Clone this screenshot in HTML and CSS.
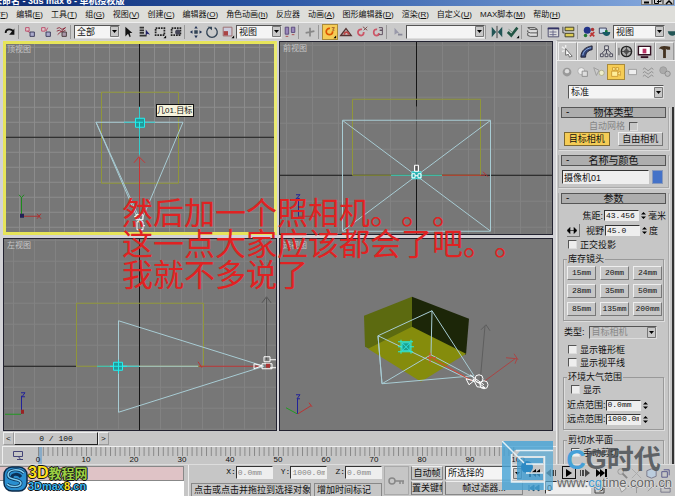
FILE: index.html
```html
<!DOCTYPE html>
<html lang="zh-CN">

<head>
    <meta charset="UTF-8">
    <title>未命名 - 3ds max 6 - 单机授权版</title>
    <link rel="stylesheet" href="styles.css">
</head>

<body>
    <header class="title-bar">
        <span class="title-text">未命名 - 3ds max 6 - 单机授权版</span>
        <div class="win-btns">
            <button aria-label="最小化"><svg width="9" height="5"><path d="M2 2.5h5" stroke="#000" stroke-width="2"/></svg></button>
            <button aria-label="还原"><svg width="9" height="5"><path d="M1.500 0v3.500h4v-3.500M4 1.500h4v-1.500" stroke="#000" fill="none"/></svg></button>
            <button aria-label="关闭"><svg width="9" height="5"><path d="M2 4l3-3 3 3" stroke="#000" stroke-width="1.500" fill="none"/></svg></button>
        </div>
    </header>

    <nav class="menu">
        <button class="first">文件(<u>F</u>)</button>
        <button>编辑(<u>E</u>)</button>
        <button>工具(<u>T</u>)</button>
        <button>组(<u>G</u>)</button>
        <button>视图(<u>V</u>)</button>
        <button>创建(<u>C</u>)</button>
        <button>编辑器(<u>O</u>)</button>
        <button>角色动画(<u>h</u>)</button>
        <button>反应器</button>
        <button>动画(<u>A</u>)</button>
        <button>图形编辑器(<u>D</u>)</button>
        <button>渲染(<u>R</u>)</button>
        <button>自定义(<u>U</u>)</button>
        <button>MAX脚本(<u>M</u>)</button>
        <button>帮助(<u>H</u>)</button>
    </nav>

    <!-- 主工具栏 -->
    <div class="toolbar">
        <button class="tool" aria-label="重做"><svg viewBox="0 0 16 16"><path d="M3 9c0-5 7-5 9-1" stroke="#111" stroke-width="2" fill="none"/><path d="M13 4v7H7z" fill="#111"/></svg></button>
        <i class="sep"></i>
        <button class="tool" aria-label="链接"><svg viewBox="0 0 16 16"><path d="M3 3h4v4H3zM5 7l4 2" stroke="#b46" fill="#dcc"/><path d="M8 8h5v5H8z" stroke="#335" fill="#aac"/></svg></button>
        <button class="tool" aria-label="断开链接"><svg viewBox="0 0 16 16"><path d="M3 3h4v4H3z" stroke="#b46" fill="#dcc"/><path d="M10 3l-2 4" stroke="#b46"/><path d="M8 8h5v5H8z" stroke="#335" fill="#aac"/></svg></button>
        <button class="tool" aria-label="绑定"><svg viewBox="0 0 16 16"><path d="M2 4l3-1 3 2 4-2M2 7l3-1 3 2 4-2M3 11l9-8" stroke="#823" fill="none"/><path d="M8 8h5v5H8z" stroke="#433" fill="#a9a"/></svg></button>
        <i class="sep"></i>
        <select class="w45" aria-label="选择过滤器"><option>全部</option></select>
        <button class="tool" aria-label="选择"><svg viewBox="0 0 16 16"><path d="M5 2v11l3-3 2 4 1-1-1-4h3z" fill="#111"/></svg></button>
        <button class="tool" aria-label="按名称选择"><svg viewBox="0 0 16 16"><path d="M3 3h5M3 6h5M3 9h5M3 12h8" stroke="#333" stroke-width="2"/><path d="M10 5v7l2-2 3 1z" fill="#226"/></svg></button>
        <button class="tool" aria-label="矩形选区"><svg viewBox="0 0 16 16"><path d="M3 3.500h10v8H3z" stroke="#222" stroke-width="2" stroke-dasharray="2 1" fill="none"/><path d="M15 12v3h-3z"/></svg></button>
        <button class="tool" aria-label="窗口交叉"><svg viewBox="0 0 16 16"><path d="M3 3.500h10v8H3z" stroke="#222" stroke-width="2" stroke-dasharray="2 1" fill="none"/><circle cx="10" cy="8" r="3" fill="#445"/></svg></button>
        <i class="sep"></i>
        <button class="tool" aria-label="移动"><svg viewBox="0 0 16 16"><path d="M8 1l2 3H6zM8 15l2-3H6zM1 8l3-2v4zM15 8l-3-2v4z" fill="#235"/><path d="M6 6h4v4H6z" fill="#345"/></svg></button>
        <button class="tool" aria-label="旋转"><svg viewBox="0 0 16 16"><path d="M5 3a6 6 0 1 0 6 0" stroke="#345" stroke-width="1.500" fill="none"/><path d="M3 2h5v4z" fill="#345"/></svg></button>
        <button class="tool" aria-label="缩放"><svg viewBox="0 0 16 16"><path d="M2.500 2.500h10v10h-10z" stroke="#966" fill="#ccd"/><path d="M3 7h5v5H3z" fill="#a44"/><path d="M15 12v3h-3z"/></svg></button>
        <select class="w45" aria-label="参考坐标系"><option>视图</option></select>
        <button class="tool" aria-label="轴心"><svg viewBox="0 0 16 16"><path d="M2.500 2.500h4v8h-4zM9.500 2.500h4v6h-4z" stroke="#547" fill="#98b"/><path d="M3 13h3M10 11h3" stroke="#a44"/></svg></button>
        <i class="sep"></i>
        <button class="tool" aria-label="操纵"><svg viewBox="0 0 16 16"><path d="M8 3v10M3 9l10-2" stroke="#888" stroke-width="2"/></svg></button>
        <i class="sep"></i>
        <button class="tool on" aria-label="三维捕捉"><svg viewBox="0 0 16 16"><path d="M8 4C3 3 2 11 7 11c3 0 4-2 4-4" stroke="#d50" stroke-width="2" fill="none"/><path d="M10 3h3l-2 3h2" stroke="#952" fill="none"/><path d="M15 12v3h-3z"/></svg></button>
        <button class="tool" aria-label="角度捕捉"><svg viewBox="0 0 16 16"><path d="M2 12L8 4l6 8z" stroke="#533" stroke-width="1.500" fill="none"/><path d="M6 11c0-4 5-4 5 0" stroke="#b44" fill="none" stroke-width="2"/></svg></button>
        <button class="tool" aria-label="百分比捕捉"><svg viewBox="0 0 16 16"><path d="M8 5C2 4 2 12 7 12c3 0 3-2 3-4" stroke="#c56" stroke-width="2" fill="none"/><path d="M9 2l5 4M14 2l-4 4" stroke="#744"/></svg></button>
        <button class="tool" aria-label="微调捕捉"><svg viewBox="0 0 16 16"><path d="M7 5C2 4 2 12 6 12c3 0 3-2 3-3" stroke="#c56" stroke-width="2" fill="none"/><path d="M9 3h4v3h-3 3v5H9" stroke="#545" fill="none"/></svg></button>
        <i class="sep"></i>
        <button class="tool" aria-label="命名选择集"><svg viewBox="0 0 16 16"><path d="M4 3v8l3-2 3 1z" fill="#99a"/><path d="M8 11h5" stroke="#889" stroke-width="2"/></svg></button>
        <select class="named" aria-label="命名选择"><option></option></select>
        <i class="sep"></i>
        <button class="tool" aria-label="镜像"><svg viewBox="0 0 16 16"><path d="M2 2l5 6-5 6zM14 2L9 8l5 6z" fill="#255"/><path d="M8 1v14" stroke="#333"/></svg></button>
        <button class="tool" aria-label="对齐"><svg viewBox="0 0 16 16"><path d="M2 8l4 4 7-9" stroke="#254" stroke-width="3" fill="none"/><path d="M3 5l4 3" stroke="#687"/><path d="M15 12v3h-3z"/></svg></button>
        <i class="sep"></i>
        <button class="tool" aria-label="层"><svg viewBox="0 0 16 16"><path d="M2 3h8l3 2H5zM2 6v2l3 1h8V6M2 9v3l3 1h8V9" stroke="#444" fill="#ddd"/></svg></button>
        <i class="sep"></i>
        <button class="tool" aria-label="曲线编辑器"><svg viewBox="0 0 16 16"><path d="M2.500 3.500h12v10h-12z" stroke="#446" fill="#ddd"/><path d="M2 4h13" stroke="#336" stroke-width="2"/><path d="M4 8h8M4 11h8M8 6v7" stroke="#668"/></svg></button>
        <button class="tool" aria-label="图解视图"><svg viewBox="0 0 16 16"><path d="M3.500 2.500h10v4h-10zM3.500 9.500h10v4h-10z" stroke="#332" fill="#dc5"/><path d="M1 2v7h2" stroke="#333" fill="none"/></svg></button>
        <i class="sep"></i>
        <button class="tool" aria-label="材质编辑器"><svg viewBox="0 0 16 16"><circle cx="6" cy="6" r="4" fill="#238"/><circle cx="12" cy="5" r="2" fill="#a33"/><circle cx="4" cy="12" r="2" fill="#273"/><path d="M9 13l5-5M10 9l4 4" stroke="#b33" stroke-width="2"/></svg></button>
        <button class="tool" aria-label="渲染场景"><svg viewBox="0 0 16 16"><path d="M1.500 3.500h8v6h-8z" stroke="#335" fill="#cde"/><path d="M5 8h9c0 6-8 6-9 0z" fill="#185a64"/><path d="M8 7h3" stroke="#173" stroke-width="2"/></svg></button>
        <select class="w52" aria-label="渲染类型"><option>视图</option></select>
        <button class="tool" aria-label="快速渲染"><svg viewBox="0 0 16 16"><path d="M2 7h10c0 7-9 7-10 0z" fill="#255"/></svg></button>
    </div>

    <main class="work">
        <section class="stage">
            <div class="viewports">
                <div class="view active">
                    <span class="view-name">顶视图</span>
                    <svg class="scene" viewBox="6 44 268 188" preserveAspectRatio="xMidYMid slice">
                        <defs><pattern id="g15" x="4" y="2" width="15" height="15" patternUnits="userSpaceOnUse"><path d="M.5 0v15M0 .5h15" class="grid"/></pattern></defs>
                        <rect x="6" y="44" width="268" height="188" fill="url(#g15)"/>
                        <path d="M139.500 44v64M6 137.500h268" class="axis"/>
                        <path d="M101.500 92.500h77v91h-77z" class="box"/>
                        <path d="M96 122.500h87L141 222zM96 122.500L139 222" class="cone"/>
                        <path d="M139.500 107v48M124 122.500h31" stroke="#3cc"/>
                        <path d="M135.500 118.500h9v9h-9z" stroke="#2ee" fill="#299"/>
                        <path d="M139.500 122v7M136 122.500h7" stroke="#2ee"/>
                        <path d="M139.500 158v60M134 163l5-6 6 6" stroke="#c33" fill="none"/>
                        <path d="M136 215h7v5h-7zM137 222h6v8h-6zM134 217h2M141 226h4" class="cam"/>
                        <path d="M21.500 216v-18M19 195l2.500 3 2.500-3" stroke="#1c8a1c" fill="none"/><path d="M22 216.500h18M37 214l4 5M41 214l-4 5" stroke="#a33"/><path d="M20 214h4v4h-4z" fill="#225"/>
                    </svg>
                    <span class="tip">几01.目标</span>
                </div>
                <div class="view">
                    <span class="view-name">前视图</span>
                    <svg class="scene" viewBox="280 42 272 192" preserveAspectRatio="xMidYMid slice">
                        <defs><pattern id="g26" x="416" y="175" width="26" height="26" patternUnits="userSpaceOnUse"><path d="M.5 0v26M0 .5h26" class="grid faint"/></pattern></defs>
                        <rect x="280" y="42" width="272" height="192" fill="url(#g26)"/>
                        <path d="M416.500 42v65M416.500 175v59M280 175.500h272" class="axis"/>
                        <path d="M416.500 107v68" stroke="#555"/>
                        <path d="M352.500 99.500h128v76h-128z" class="box"/>
                        <path d="M342.500 120.500h148v111h-148zM343 121l147 110M490 121L343 231" class="cone"/>
                        <path d="M391 175.500h51" stroke="#3cc"/><path d="M442 175.500h43M483 172l5 5" stroke="#b33"/>
                        <path d="M412 172h9v7h-9z" fill="#2aa" stroke="#5ee"/>
                        <path d="M414.500 165.500h4v6h-4zM412 174h3v4h-3zM418 174h3v4h-3zM415 176h3" class="cam"/>
                        <path d="M298.500 218v-20" stroke="#229"/><path d="M296 195h4l-4 4h4" stroke="#229" fill="none"/><path d="M298 216.500h18" stroke="#a33"/>
                    </svg>
                </div>
                <div class="view">
                    <span class="view-name">左视图</span>
                    <svg class="scene" viewBox="4 239 272 192" preserveAspectRatio="xMidYMid slice">
                        <defs><pattern id="g21" x="139" y="366" width="21" height="21" patternUnits="userSpaceOnUse"><path d="M.5 0v21M0 .5h21" class="grid faint"/></pattern></defs>
                        <rect x="4" y="239" width="272" height="192" fill="url(#g21)"/>
                        <path d="M139.500 239v192M4 366.500h72" class="axis"/>
                        <path d="M76.500 303.500h127v63h-127z" class="box"/>
                        <path d="M118.500 321v91.500L264 366.500zM118 366.500h80" class="cone"/>
                        <path d="M97 366.500h42" stroke="#3cc"/>
                        <path d="M113.500 362.500h9v8h-9z" stroke="#2ee" fill="#299"/><path d="M118.500 360v14M110 366.500h17" stroke="#2ee"/>
                        <path d="M199 366.500h62M198 362l4 6" stroke="#b33"/>
                        <path d="M266.500 360v-62M262 303l4.500-6 4.500 6" stroke="#555" fill="none"/>
                        <path d="M254 364l8 2-8 3zM262 364h10v5h-10zM264 357h6v5h-6zM270 360h6M270 368h6" class="cam"/><path d="M266 364h4v4h-4z" fill="#a33"/>
                        <path d="M21.500 414v-18" stroke="#229"/><path d="M21 393h4l-3 4h3" stroke="#229" fill="none"/><path d="M21 414.500H5" stroke="#292"/><path d="M21 410h3v4h-3z" fill="#922"/>
                    </svg>
                </div>
                <div class="view">
                    <span class="view-name">透视图</span>
                    <svg class="scene" viewBox="280 239 272 192" preserveAspectRatio="xMidYMid slice">
                        <path d="M364 316l48-19v31l-43 21-4-2z" fill="#5c6a10"/>
                        <path d="M412 297l57 22-3 36-54-26z" fill="#1c2608"/>
                        <path d="M412 327l54 27-45 28-53-33z" fill="#858c0c"/>
                        <path d="M378 336l54-25 42 65-92 8zM378 336l4 48 49-29 1-44M378 336l96 46M431 355l43 23" class="cone"/>
                        <path d="M398 342h15M398 352h15M401 340v14M411 340v14M398 347h16" stroke="#2ed"/><path d="M402 343h8v8h-8zM402 343l8 8M410 343l-8 8" stroke="#3dd" fill="#19a08c"/>
                        <path d="M430 353v10M427 358h9M433 359l39 22" stroke="#d43"/>
                        <path d="M480 383v0l5-57M481 330l5-5 4 6" stroke="#5e5e5e" fill="none"/>
                        <path d="M485 381l30-22M506 358l11 1-2 5M514 354l4 6" stroke="#a44" fill="none"/>
                        <path d="M466 379l8 2-5 4zM470 375l14 10" class="cam"/><circle cx="479" cy="379" r="4" class="cam"/><circle cx="484" cy="385" r="4" class="cam"/><path d="M473 379l12 9-8-1z" class="cam"/>
                        <path d="M297.500 414v-15" stroke="#229"/><path d="M296 395h4l-3 4h3" stroke="#229" fill="none"/><path d="M298 414l13-8M309 403l3 4" stroke="#b33"/><path d="M297 414l-11-6" stroke="#292"/>
                    </svg>
                </div>
            </div>
            <div class="time-slider">
                <button aria-label="上一帧">&lt;</button>
                <button class="thumb">0 / 100</button>
                <button aria-label="下一帧">&gt;</button>
            </div>
            <div class="track">
                <button class="mini" aria-label="打开迷你曲线编辑器"><svg width="12" height="12"><path d="M1.500 1.500h9v5h-9zM5 9.500h6M6 6l3 4" stroke="#447" fill="none"/></svg></button>
                <div class="ruler">
                    <svg class="ticks" width="100%" height="9">
                        <defs><pattern id="tick" width=".01" height="1"><path d="M.5 0v9" stroke="#888"/></pattern></defs>
                        <rect width="100%" height="9" fill="url(#tick)"/>
                    </svg>
                    <div class="marks">
                        <span>0</span><span>10</span><span>20</span><span>30</span><span>40</span><span>50</span><span>60</span><span>70</span><span>80</span><span>90</span><span>100</span>
                    </div>
                </div>
            </div>
        </section>

        <!-- 命令面板 -->
        <aside class="panel">
            <div class="tabs">
                <button class="cur" aria-label="创建"><svg viewBox="0 0 16 16"><path d="M6 5l7 8-3 1-1-3-3 1z" fill="#fff" stroke="#666"/><path d="M2 3l3 2M6 1v3M2 8l3-1" stroke="#eee" stroke-width="1.500"/></svg></button>
                <button aria-label="修改"><svg viewBox="0 0 16 16"><path d="M2 14C2 7 7 3 14 2v4c-5 1-7 4-7 8z" fill="#347" stroke="#223"/><path d="M4 12c1-5 4-7 9-8" stroke="#9be" fill="none"/></svg></button>
                <button aria-label="层次"><svg viewBox="0 0 16 16"><path d="M6 2h4v4H6zM1.500 10.500h3v3h-3zM6.500 10.500h3v3h-3zM11.500 10.500h3v3h-3zM8 6v4M7 6l-4 4M9 6l4 4" stroke="#445" fill="#ddd"/></svg></button>
                <button aria-label="运动"><svg viewBox="0 0 16 16"><circle cx="9" cy="8" r="5.500" stroke="#222" stroke-width="1.500" fill="#aaa"/><circle cx="9" cy="8" r="2" fill="none" stroke="#222"/><path d="M9 3v10M4 8h10M1 4v8" stroke="#444"/></svg></button>
                <button aria-label="显示"><svg viewBox="0 0 16 16"><path d="M1.500 2.500h13v9h-13z" stroke="#312" stroke-width="1.500" fill="#fff"/><path d="M6 5h4v5H6z" fill="#b36"/><path d="M4 14h8" stroke="#312" stroke-width="2"/></svg></button>
                <button aria-label="工具"><svg viewBox="0 0 16 16"><path d="M2 5c2-4 7-3 12-2v3h-3L9 5 8 6H6L4 5z" fill="#432"/><path d="M8 5v10" stroke="#432" stroke-width="3"/></svg></button>
            </div>
            <div class="kinds">
                <button aria-label="几何体"><svg viewBox="0 0 16 16"><circle cx="8" cy="8" r="5" fill="#999"/><circle cx="8" cy="7" r="2.500" fill="#ddd"/></svg></button>
                <button aria-label="图形"><svg viewBox="0 0 16 16"><circle cx="6" cy="7" r="4" fill="#eee" stroke="#aaa"/><path d="M7 7h6v6H7z" fill="#ddd" stroke="#888"/></svg></button>
                <button aria-label="灯光"><svg viewBox="0 0 16 16"><path d="M2 3l6 3-3 6z" fill="#ccc" stroke="#999"/><circle cx="11" cy="9" r="3" fill="#eec" stroke="#aa8"/></svg></button>
                <button class="on" aria-label="摄影机"><svg viewBox="0 0 16 16"><path d="M3 7h7v6H3zM10 9l3-2v5l-3-2M4 3h3v3H4zM8 3h3v3H8z" fill="#fe9" stroke="#c93"/></svg></button>
                <button aria-label="辅助对象"><svg viewBox="0 0 16 16"><path d="M3 5h9v6H3z" fill="#eee" stroke="#999"/></svg></button>
                <button aria-label="空间扭曲"><svg viewBox="0 0 16 16"><path d="M1 5q2-3 4 0t4 0 4 0M1 9q2-3 4 0t4 0 4 0M1 13q2-3 4 0t4 0 4 0" stroke="#888" fill="none"/></svg></button>
                <button aria-label="系统"><svg viewBox="0 0 16 16"><circle cx="6" cy="6" r="4" fill="#aaa" stroke="#999"/><circle cx="11" cy="10" r="3" fill="#bbb" stroke="#888"/></svg></button>
            </div>
            <select class="category" aria-label="类别"><option>标准</option></select>

            <div class="rollouts">
                <section class="rollout">
                    <h2><button>-</button>物体类型</h2>
                    <label class="auto">自动网格 <input type="checkbox" disabled></label>
                    <div class="types"><button class="on">目标相机</button><button>自由相机</button></div>
                </section>
                <section class="rollout">
                    <h2><button>-</button>名称与颜色</h2>
                    <div class="name-row">
                        <input type="text" value="摄像机01" aria-label="名称">
                        <button class="color" aria-label="颜色"></button>
                    </div>
                </section>
                <section class="rollout params">
                    <h2><button>-</button>参数</h2>
                    <div class="row right">
                        <label for="lens">焦距:</label><input id="lens" class="num" type="text" value="43.456"><i class="spin"></i><span>毫米</span>
                    </div>
                    <div class="row right fov">
                        <button class="dir" aria-label="视野方向"><svg width="10" height="7"><path d="M0 3.500l3-3v6zM10 3.500l-3-3v6zM2 3.500h6" fill="#000" stroke="#000" stroke-width=".6"/></svg></button>
                        <label for="fov">视野</label><input id="fov" class="num" type="text" value="45.0"><i class="spin"></i><span>度</span>
                    </div>
                    <label class="check"><input type="checkbox">正交投影</label>
                    <fieldset>
                        <legend>库存镜头</legend>
                        <div class="lenses">
                            <button>15mm</button><button>20mm</button><button>24mm</button>
                            <button>28mm</button><button>35mm</button><button>50mm</button>
                            <button>85mm</button><button>135mm</button><button>200mm</button>
                        </div>
                    </fieldset>
                    <div class="row type">
                        <label for="type">类型:</label><select id="type" disabled><option>目标相机</option></select>
                    </div>
                    <label class="check"><input type="checkbox">显示锥形框</label>
                    <label class="check"><input type="checkbox">显示视平线</label>
                    <fieldset>
                        <legend>环境大气范围</legend>
                        <label class="check in"><input type="checkbox">显示</label>
                        <div class="row"><label for="near">近点范围:</label><input id="near" class="num" type="text" value="0.0mm"><i class="spin"></i></div>
                        <div class="row"><label for="far">远点范围:</label><input id="far" class="num" type="text" value="1000.0mm"><i class="spin"></i></div>
                    </fieldset>
                    <fieldset>
                        <legend>剪切水平面</legend>
                        <label class="check in"><input type="checkbox">手动剪切</label>
                    </fieldset>
                </section>
            </div>
        </aside>
    </main>

    <footer class="status">
        <div class="listener"><div class="macro"></div><div class="script"></div></div>
        <div class="prompt">
            <div class="coords">
                <label>X:<input type="text" value="0.0mm"></label>
                <label>Y:<input type="text" value="1000.0mm"></label>
                <label>Z:<input type="text" value="0.0mm"></label>
            </div>
            <div class="hints"><span class="hint">点击或点击并拖拉到选择对象</span><button>增加时间标记</button></div>
        </div>
        <button class="key" aria-label="设置关键点"><svg width="18" height="10"><circle cx="4" cy="5" r="3" stroke="#888" stroke-width="1.500" fill="none"/><path d="M7 5h9M12 5v3M15 5v3" stroke="#888" stroke-width="1.500"/></svg></button>
        <div class="keys">
            <button>自动帧</button>
            <select aria-label="关键点集"><option>所选择的</option></select>
            <button>置关键帧</button>
            <button>帧过滤器...</button>
        </div>
        <div class="play">
            <div class="play-row">
                <button aria-label="转至开头"><svg width="12" height="10"><path d="M1 1h2v8H1zM8 1v8L3 5zM12 1v8L7 5z"/></svg></button>
                <button aria-label="前一帧"><svg width="12" height="10"><path d="M6 1v8L1 5zM7 2h2v6H7zM10 2h1v6h-1z" fill="#444"/></svg></button>
                <button class="run" aria-label="播放"><svg width="12" height="10"><path d="M3 1l6 4-6 4z"/></svg></button>
                <button aria-label="后一帧"><svg width="12" height="10"><path d="M6 1v8l5-4zM3 2h2v6H3zM1 2h1v6H1z" fill="#444"/></svg></button>
                <button aria-label="转至结尾"><svg width="12" height="10"><path d="M9 1h2v8H9zM4 1v8l5-4zM0 1v8l5-4z"/></svg></button>
            </div>
            <div class="play-row">
                <button aria-label="关键点模式"><svg width="12" height="10"><path d="M1 2v6M6 2v6L2 5zM11 2v6L7 5z" fill="#257" stroke="#257"/></svg></button>
                <input type="text" value="0" aria-label="当前帧">
                <button aria-label="时间配置"><svg width="12" height="12"><path d="M1 3h9v8H1z" fill="#ccc" stroke="#444"/><circle cx="6" cy="6" r="3" fill="none" stroke="#444"/></svg></button>
            </div>
        </div>
        <div class="nav-tools">
            <button aria-label="缩放视图"><svg viewBox="0 0 14 14"><circle cx="5" cy="5" r="3" fill="none" stroke="#999"/><path d="M7 7l5 5" stroke="#888" stroke-width="2"/></svg></button>
            <button aria-label="缩放所有"><svg viewBox="0 0 14 14"><path d="M2 2l10 10M12 2L2 12" stroke="#aaa"/></svg></button>
            <button aria-label="最大化显示"><svg viewBox="0 0 14 14"><path d="M2 4l5-2 5 2v6l-5 2-5-2z" fill="#bcd" stroke="#778"/></svg></button>
            <button aria-label="所有最大化"><svg viewBox="0 0 14 14"><path d="M3 5h6v6H3zM5 3h6v6" fill="none" stroke="#558"/></svg></button>
            <button aria-label="视野"><svg viewBox="0 0 14 14"><path d="M2 2l9 6-5 4z" fill="#ddd" stroke="#999"/></svg></button>
            <button aria-label="平移"><svg viewBox="0 0 14 14"><path d="M7 1v12M1 7h12" stroke="#999"/></svg></button>
            <button aria-label="弧形旋转"><svg viewBox="0 0 14 14"><path d="M2 7c3-6 8-4 10 0M3 11l8-8" stroke="#999" fill="none"/></svg></button>
            <button aria-label="最大化视口"><svg viewBox="0 0 14 14"><path d="M2 2h10v10H2zM6 2v6h6" fill="none" stroke="#778"/></svg></button>
        </div>
    </footer>

    <p class="caption">然后加一个照相机。。。<br>这一点大家应该都会了吧。。<br>我就不多说了</p>

    <div class="logo-3d">
        <svg width="25" height="28" viewBox="0 0 25 28">
            <rect x="1" y="2" width="23" height="24" rx="8" fill="#2a8fd0" stroke="#0a2a4a" stroke-width="1.500"/>
            <path d="M21 8C16 3 5 4 5 10c0 6 13 3 13 8 0 4-10 5-14 1M18 12c-3-4-9-3-9 0 0 2 3 3 6 3" fill="none" stroke="#0b3157" stroke-width="3"/>
            <path d="M21 8C16 3 5 4 5 10c0 6 13 3 13 8 0 4-10 5-14 1" fill="none" stroke="#7fd0f4" stroke-width="1.500"/>
        </svg>
        <div class="logo-words">
            <div class="cn"><b>3D</b>教程网</div>
            <div class="en">3Dmax<b>8</b>.cn</div>
        </div>
    </div>

    <div class="logo-cg">
        <svg width="52" height="50" viewBox="0 0 52 50">
            <path d="M0 0h51v9H13l-4 5v27h33v8H0z" fill="#45a3d6" opacity=".8"/>
            <path d="M51 10v39h-8V15H14l4-5z" fill="#55a9d6" opacity=".7"/>
            <path d="M15 17h26v6H24v9h17v7H15z" fill="#3f9cd2" opacity=".8"/>
            <circle cx="25" cy="26" r="6" fill="#2d8ac4"/>
            <path d="M0 0l22 22M51 9.500H14M9.500 13v28H42M42.500 15v34M16 16h26M24 23h17M24 32h17" stroke="#e3eff5" fill="none" stroke-width="1.500"/>
        </svg>
        <div class="cg-words">
            <div class="cg-name"><b>C</b>G时代</div>
            <div class="cg-url">www.<b>cg</b>time.com.cn</div>
        </div>
    </div>
</body>

</html>
```
FILE: styles.css
```css
* {
    margin: 0;
    padding: 0;
    box-sizing: border-box;
}

body {
    display: flex;
    flex-direction: column;
    position: relative;
    height: 100vh;
    overflow: hidden;
    background: #c6c6c6;
    color: #111;
    font: 9px/12px "Liberation Sans", "Noto Sans CJK SC", sans-serif;
}

button,
input,
select {
    font: inherit;
    color: inherit;
    border: 0;
    border-radius: 0;
    background: none;
    min-width: 0;
    white-space: nowrap;
}

svg {
    display: block;
}

/* 标题栏 */
.title-bar {
    display: flex;
    justify-content: space-between;
    align-items: flex-end;
    height: 6px;
    flex: none;
    overflow: hidden;
    background: linear-gradient(to right, #0c2a72, #2a56a4 40%, #86aade);
    color: #fff;
}

.title-text {
    font-weight: bold;
    line-height: 10px;
    text-indent: -7px;
}

.win-btns {
    display: flex;
    align-self: flex-start;
    padding-right: 1px;
}

.win-btns button {
    width: 11px;
    height: 5px;
    background: #ccc;
    border: 1px solid #777;
    border-top: 0;
}

/* 菜单 */
.menu {
    display: flex;
    height: 16px;
    flex: none;
    background: #dededa;
}

.menu button {
    padding: 0 4px;
    font-size: 8px;
    line-height: 15px;
}

.menu .first {
    margin-left: -22px;
}

/* 工具栏 */
.toolbar {
    display: flex;
    align-items: center;
    height: 18px;
    flex: none;
    padding-left: 2px;
    background: #cacaca;
    border-top: 1px solid #eee;
    overflow: hidden;
}

.tool {
    flex: none;
    width: 16px;
    height: 16px;
    padding: 1px;
}

.tool svg {
    width: 14px;
    height: 14px;
}

.on {
    background: #f5cc55;
    border: 1px solid #a98a3a;
}

.tool.on {
    padding: 0;
}

.sep {
    flex: none;
    width: 4px;
    height: 14px;
    border-left: 1px solid #999;
    border-right: 2px solid transparent;
}

select {
    appearance: none;
    height: 14px;
    padding: 0 11px 0 2px;
    border: 1px solid #555;
    border-right-color: #ddd;
    border-bottom-color: #ddd;
    background: #f4f4f4 url("data:image/svg+xml,%3Csvg xmlns='http://www.w3.org/2000/svg' width='9' height='11'%3E%3Cpath fill='%23c8c8c8' stroke='%23777' d='M.5.5h8v10h-8z'/%3E%3Cpath d='M2 4h5L4.500 7z'/%3E%3C/svg%3E") no-repeat right center;
}

.toolbar select {
    flex: none;
}

.w45 {
    width: 46px;
}

.named {
    width: 79px;
}

.w52 {
    width: 52px;
}

/* 工作区 */
.work {
    display: grid;
    grid-template-columns: 1fr 119px;
    flex: 1;
    min-height: 0;
}

.stage {
    display: flex;
    flex-direction: column;
    min-height: 0;
}

.viewports {
    display: grid;
    grid-template: 1fr 1fr / 1fr 1fr;
    gap: 3px 2px;
    flex: 1;
    min-height: 0;
    padding: 1px 3px 0;
    background: #d2d2d6;
}

.view {
    position: relative;
    min-height: 0;
    overflow: hidden;
    border: 1px solid #222230;
    background: #777;
}

.view.active {
    border: 3px solid #e6e45a;
    border-right-color: #eaea70;
}

.scene {
    width: 100%;
    height: 100%;
}

.view-name {
    position: absolute;
    left: 3px;
    top: 1px;
    font-size: 8px;
    color: #c6c6c6;
}

.active .view-name {
    left: 1px;
    top: 0;
}

.tip {
    position: absolute;
    left: 56%;
    top: 32%;
    padding: 1px 1px 1px 0;
    border: 1px solid #111;
    background: #f6f3dc;
    font-size: 8px;
    line-height: 9px;
}

.grid {
    stroke: #8c8c8c;
}

.faint {
    stroke: #828282;
}

.axis {
    stroke: #161616;
}

.box {
    fill: none;
    stroke: #90963a;
}

.cone {
    fill: none;
    stroke: #a8ccd4;
}

.cam {
    fill: none;
    stroke: #fff;
}

/* 时间滑块 */
.time-slider {
    display: flex;
    height: 15px;
    flex: none;
    padding: 1px 3px;
    font-family: "Liberation Mono", monospace;
    font-size: 8px;
}

.time-slider button {
    width: 11px;
    border: 1px solid #999;
    border-top-color: #eee;
    border-left-color: #eee;
}

.time-slider .thumb {
    width: 84px;
    border-right-color: #222;
    border-bottom-color: #222;
}

.track {
    display: flex;
    height: 18px;
    flex: none;
    margin-left: 2px;
    border-top: 1px solid #eee;
    border-left: 1px solid #eee;
}

.mini {
    flex: none;
    width: 35px;
    padding: 2px 9px;
}

.ruler {
    flex: 1;
    margin-right: 38px;
    background: linear-gradient(#8aacc8, #8aacc8) no-repeat -1px 0 / 5px 100%;
}

.marks {
    display: flex;
    justify-content: space-between;
    font-size: 8px;
    line-height: 8px;
}

.marks span {
    display: flex;
    justify-content: center;
    width: 0;
}

/* 命令面板 */
.panel {
    display: flex;
    flex-direction: column;
    min-height: 0;
    overflow: hidden;
    border-left: 1px solid #eee;
    border-top: 1px solid #aaa;
}

.tabs {
    display: flex;
    flex: none;
    height: 20px;
    padding: 1px 1px 0 1px;
    border-bottom: 1px solid #eee;
}

.tabs button {
    flex: 1;
    padding: 1px;
    border: 1px solid #999;
    border-left-color: #eee;
    border-top-color: #eee;
    border-bottom: 0;
}

.tabs svg {
    width: 15px;
    height: 15px;
    margin: auto;
}

.kinds {
    display: flex;
    flex: none;
    padding: 3px 2px;
}

.kinds button {
    flex: 1;
    height: 16px;
}

.kinds svg {
    width: 14px;
    height: 14px;
    margin: auto;
}

.category {
    flex: none;
    margin: 2px 11px 8px;
}

.rollouts {
    flex: 1;
    min-height: 0;
    overflow: hidden;
    margin-right: 1px;
    padding-right: 3px;
    border-right: 2px solid #333;
}

.rollout {
    margin: 0 0 5px 1px;
    padding: 0 2px 3px;
    border: 1px solid #aaa;
    border-top: 0;
    box-shadow: 1px 1px #ddd;
}

.rollout h2 {
    display: flex;
    justify-content: center;
    position: relative;
    height: 11px;
    font-size: 10px;
    font-weight: normal;
    line-height: 9px;
    background: #adadad;
    border: 1px solid #555;
}

.rollout h2 button {
    position: absolute;
    left: 4px;
    top: 0;
    line-height: 8px;
}

.auto {
    display: flex;
    align-items: center;
    justify-content: center;
    gap: 4px;
    margin: 2px 0 0 0;
    color: #858585;
}

.types {
    display: grid;
    grid-template-columns: 1fr 1fr;
    gap: 8px;
    padding: 0 3px;
}

.types button,
.lenses button {
    height: 14px;
    border: 1px solid #eee;
    border-right-color: #777;
    border-bottom-color: #777;
}

.types .on {
    border-color: #7c6730;
}

.name-row {
    display: flex;
    gap: 3px;
    padding: 4px 3px 0 1px;
}

.name-row input {
    flex: 1;
    height: 14px;
}

input[type="text"] {
    padding: 0 1px;
    background: #eee;
    border: 1px solid #eee;
    border-left-color: #333;
    border-top-color: #333;
}

.color {
    width: 11px;
    height: 14px;
    background: #4472c8;
    border: 1px solid #89b;
}

input[type="checkbox"] {
    appearance: none;
    flex: none;
    width: 9px;
    height: 9px;
    background: #eee;
    border: 1px solid #ddd;
    border-left-color: #555;
    border-top-color: #555;
}

input[type="checkbox"]:disabled {
    background: none;
}

.row {
    display: flex;
    align-items: center;
    height: 14px;
}

.row.right {
    justify-content: flex-end;
    height: 15px;
}

.params > h2 {
    margin-bottom: 4px;
}

.num {
    width: 35px;
    height: 11px;
    font-family: "Liberation Mono", monospace;
    font-size: 8px;
}

.right .num {
    margin-left: 1px;
}

.fov {
    padding-right: 8px;
}

.dir {
    width: 13px;
    height: 13px;
    margin-right: auto;
    margin-left: 6px;
    border-right: 1px solid #777;
    border-bottom: 1px solid #777;
}

.spin {
    width: 7px;
    height: 9px;
    margin: 0 1px;
    background: url("data:image/svg+xml,%3Csvg xmlns='http://www.w3.org/2000/svg' width='7' height='9'%3E%3Cpath d='M1 3.500h5L3.500 1zM1 5.500h5L3.500 8z'/%3E%3C/svg%3E");
}

.check {
    display: flex;
    align-items: center;
    gap: 3px;
    height: 13px;
    padding-left: 7px;
}

.check.in {
    margin-bottom: 2px;
    padding-left: 4px;
}

fieldset {
    min-width: 0;
    margin: 2px 2px 4px;
    padding: 0 1px 3px 3px;
    border: 1px solid #999;
    box-shadow: inset 1px 0 #ddd, 1px 1px #ddd;
}

legend {
    padding: 0 1px;
}

.lenses {
    display: grid;
    grid-template-columns: repeat(3, 1fr);
    gap: 4px;
    padding: 1px 0;
    font-family: "Liberation Mono", monospace;
    font-size: 8px;
}

.type {
    margin: 0 9px 4px 3px;
    gap: 4px;
}

.type select {
    flex: 1;
    height: 13px;
    line-height: 11px;
    background-color: #c6c6c6;
    color: #888;
    opacity: 1;
}

/* 状态栏 */
.status {
    display: flex;
    flex: none;
    height: 32px;
    border-top: 1px solid #ddd;
}

.listener {
    display: flex;
    flex-direction: column;
    width: 184px;
    padding-top: 1px;
}

.macro {
    height: 15px;
    background: #dfc3c6;
    border: 1px solid #888;
    border-left: 0;
}

.script {
    flex: 1;
    background: #fff;
}

.prompt {
    display: flex;
    flex-direction: column;
    justify-content: space-between;
    width: 194px;
    margin-left: 4px;
    padding: 1px 0 0 2px;
    border-left: 1px solid #eee;
}

.coords {
    display: flex;
    justify-content: flex-end;
    gap: 8px;
}

.coords label {
    display: flex;
    font-family: "Liberation Mono", monospace;
    font-size: 8px;
}

.coords input {
    width: 37px;
    height: 13px;
    color: #888;
}

.hints {
    display: flex;
    gap: 3px;
}

.hint {
    flex: 1;
    overflow: hidden;
    white-space: nowrap;
    padding-left: 2px;
    border: 1px solid #888;
    border-bottom: 0;
}

.hints button {
    flex: none;
    width: 68px;
    padding-left: 2px;
    text-align: left;
    border: 1px solid #888;
    border-bottom: 0;
}

.key {
    width: 25px;
    margin: 1px 2px;
    padding-left: 3px;
    border: 1px solid #aaa;
}

.keys {
    display: grid;
    grid-template: 14px 14px / 32px 78px;
    gap: 1px 2px;
    padding-top: 1px;
}

.keys button {
    overflow: hidden;
    border: 1px solid #888;
    border-top-color: #eee;
    border-left-color: #777;
}

.play {
    width: 86px;
    margin-left: 5px;
}

.play-row {
    display: flex;
    gap: 3px;
    height: 15px;
    align-items: center;
}

.play-row button {
    flex: none;
    width: 14px;
    height: 13px;
}

.play-row .run {
    border: 1px solid #111;
}

.play-row input {
    width: 46px;
    height: 13px;
}

.nav-tools {
    display: grid;
    grid-template-columns: repeat(4, 1fr);
    flex: 1;
    padding: 1px 2px;
}

.nav-tools svg {
    width: 13px;
    height: 13px;
}

/* 叠加文字与标志 */
.caption {
    position: absolute;
    left: 122px;
    top: 198px;
    color: #e02222;
    font: 400 31px/31px "Liberation Serif", "Noto Sans CJK SC", serif;
    text-spacing-trim: space-all;
    white-space: nowrap;
}

.logo-3d {
    display: flex;
    position: absolute;
    left: 3px;
    bottom: 3px;
}

.logo-words {
    padding-top: 1px;
    font-weight: bold;
    line-height: 13px;
    text-shadow: 1px 0 #111, -1px 0 #111, 0 1px #111, 0 -1px #111;
}

.cn {
    font-size: 13px;
    color: #9bd044;
}

.cn b,
.en b {
    color: #ffe11a;
}

.cn b {
    font-size: 16px;
}

.en {
    font-size: 11px;
    color: #35b5f0;
}

.logo-cg {
    display: flex;
    gap: 3px;
    position: absolute;
    right: 3px;
    bottom: 5px;
}

.cg-words {
    padding-top: 4px;
}

.cg-name {
    padding-left: 9px;
    font-size: 27px;
    font-weight: bold;
    line-height: 30px;
    color: rgba(75, 80, 85, .85);
}

.cg-name b {
    color: #46a0d8;
}

.cg-url {
    font-size: 13px;
    line-height: 15px;
    color: #666;
    text-shadow: 1px 0 #ddd, -1px 0 #ddd, 0 1px #ddd;
}

.cg-url b {
    font-weight: normal;
    color: #3a98d0;
}
```
